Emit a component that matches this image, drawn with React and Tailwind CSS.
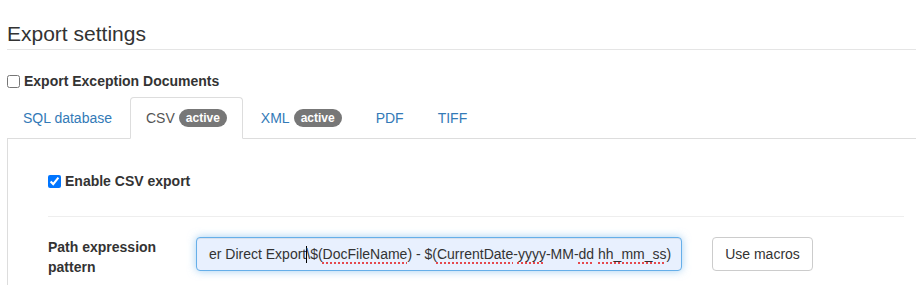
import React from 'react';

const tabs = [
  { name: 'SQL database' },
  { name: 'CSV', badge: 'active', active: true },
  { name: 'XML', badge: 'active' },
  { name: 'PDF' },
  { name: 'TIFF' },
];

function Spell({ children }) {
  return (
    <span className="underline decoration-dotted decoration-[#e5484d] decoration-2 underline-offset-[3px]">
      {children}
    </span>
  );
}

export default function App() {
  return (
    <div className="w-[916px] h-[285px] overflow-hidden bg-white text-[14px] leading-[20px] text-[#333] font-['Liberation_Sans',Arial,sans-serif]">
      <div className="pl-[7px] w-[945px]">
        <div className="mt-[19px] h-[31px] border-b border-[#e5e5e5] text-[21px] leading-[30px]">
          Export settings
        </div>

        <label className="mt-[21px] flex h-[20px] items-center gap-[4px] font-bold">
          <input type="checkbox" className="m-0 h-[13px] w-[13px]" />
          Export Exception Documents
        </label>

        <ul className="mt-[6px] flex border-b border-[#ddd]">
          {tabs.map((t) => (
            <li key={t.name} className="-mb-px mr-[2px]">
              <div
                className={`flex items-center rounded-t-[4px] border px-[15px] py-[10px] ${
                  t.active
                    ? 'border-[#ddd] border-b-transparent bg-white text-[#555]'
                    : 'border-transparent text-[#337ab7]'
                }`}
              >
                {t.name}
                {t.badge && (
                  <span className="ml-[4px] inline-block rounded-[10px] bg-[#777] px-[7px] py-[3px] text-[12px] font-bold leading-[12px] text-white">
                    {t.badge}
                  </span>
                )}
              </div>
            </li>
          ))}
        </ul>

        <div className="border-x border-b border-[#ddd] px-[40px] pt-[32px] pb-[20px]">
          <label className="flex h-[20px] items-center gap-[4px] font-bold">
            <input type="checkbox" defaultChecked className="m-0 h-[13px] w-[13px]" />
            Enable CSV export
          </label>

          <hr className="mt-[25px] border-t border-[#eee]" />

          <div className="mt-[20px] flex items-start">
            <div className="w-[120px] mr-[28px] font-bold">Path expression pattern</div>
            <div className="flex h-[34px] w-[486px] items-center overflow-hidden whitespace-nowrap rounded-[4px] border border-[#66afe9] bg-[#e8f0fe] px-[12px] shadow-[inset_0_1px_1px_rgba(0,0,0,.075),0_0_8px_rgba(102,175,233,.6)]">
              <span>
                er Direct Export
                <span className="inline-block h-[17px] w-px -mr-px bg-black align-[-4px]" />
                \$(<Spell>DocFileName</Spell>) - $(<Spell>CurrentDate</Spell>-<Spell>yyyy</Spell>-MM-<Spell>dd</Spell>{' '}
                <Spell>hh_mm_ss</Spell>)
              </span>
            </div>
            <button className="ml-[30px] h-[34px] w-[101px] rounded-[4px] border border-[#ccc] bg-white text-[#333]">
              Use macros
            </button>
          </div>
        </div>
      </div>
    </div>
  );
}
